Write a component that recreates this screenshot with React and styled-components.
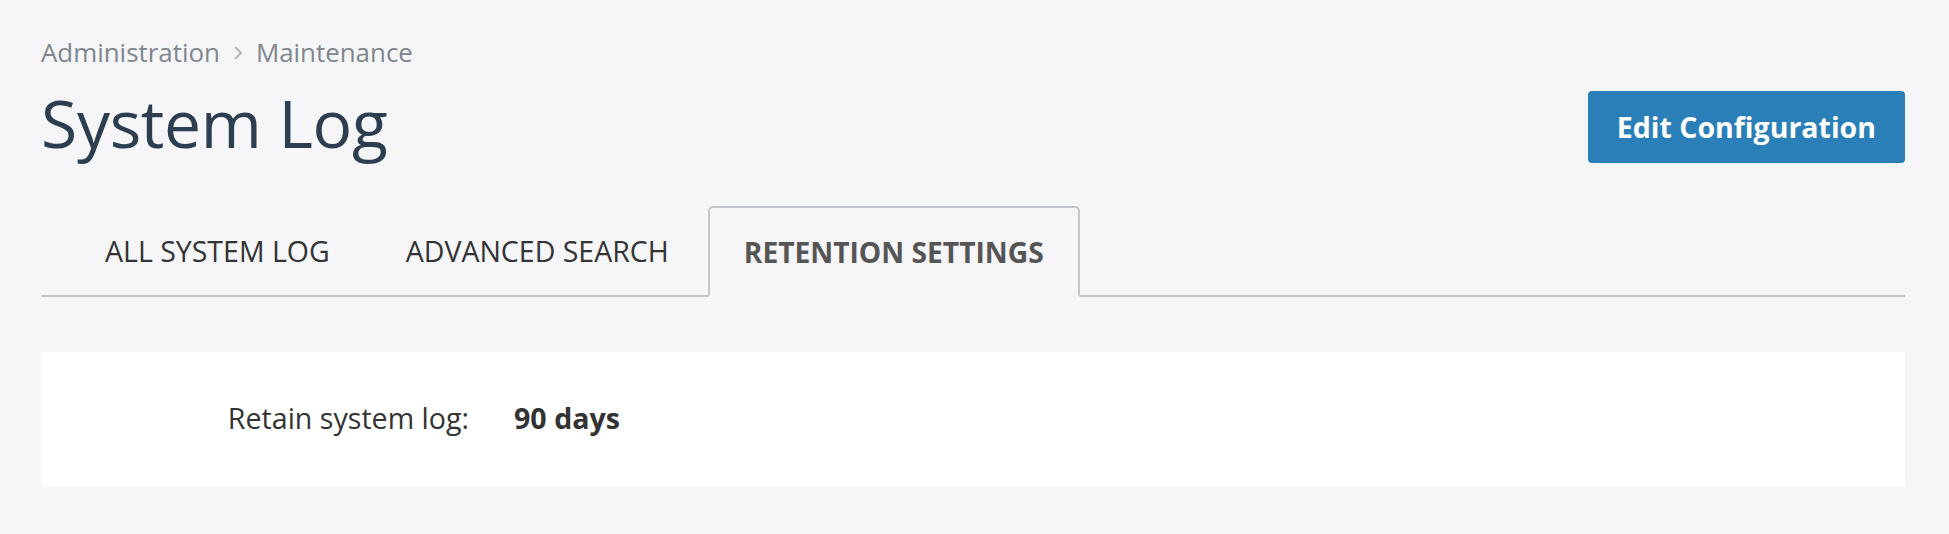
import React from 'react';
import styled, { createGlobalStyle } from 'styled-components';

const GlobalStyle = createGlobalStyle`
  html, body {
    margin: 0;
    padding: 0;
    background: #f6f6f8;
    font-family: 'Open Sans', 'Noto Sans', sans-serif;
  }
`

const Page = styled.div`
  padding: 30px 44px 40px 41px;
`

const Breadcrumb = styled.nav`
  display: flex;
  align-items: center;
  gap: 11px;
  font-size: 25.9px;
  color: #7f868e;
  height: 44px;
`

const Chevron = styled.svg`
  width: 14px;
  height: 18px;
  margin-top: 2px;
`

const HeaderRow = styled.div`
  display: flex;
  align-items: center;
  justify-content: space-between;
  margin-top: 4px;
`

const Title = styled.h1`
  margin: 0;
  font-size: 66px;
  font-weight: 400;
  color: #2c3e50;
  line-height: 88px;
  letter-spacing: -0.3px;
`

const PrimaryButton = styled.button`
  font-family: inherit;
  background: #2a7fb8;
  color: #fff;
  border: none;
  border-radius: 4px;
  font-size: 28.5px;
  font-weight: 700;
  height: 72px;
  padding: 0 29px;
  margin-top: 10px;
  cursor: pointer;
`

const TabList = styled.div`
  display: flex;
  align-items: flex-end;
  margin-top: 40px;
  padding-left: 27px;
  border-bottom: 2px solid #c3c6cb;
  height: 89px;
`

const Tab = styled.div`
  display: flex;
  align-items: center;
  height: ${p => (p.$active ? '87px' : '89px')};
  padding: 0 ${p => (p.$active ? '34px' : '37px')};
  margin-right: 2px;
  margin-bottom: ${p => (p.$active ? '-2px' : '0')};
  font-size: ${p => (p.$active ? '28.2px' : '28.5px')};
  font-weight: ${p => (p.$active ? 700 : 400)};
  color: ${p => (p.$active ? '#555555' : '#333333')};
  background: #f6f6f8;
  border: ${p => (p.$active ? '2px solid #c3c6cb' : 'none')};
  border-bottom: ${p => (p.$active ? '2px solid #f6f6f8' : 'none')};
  border-radius: 5px 5px 0 0;
  box-sizing: content-box;
`

const Card = styled.div`
  margin-top: 55px;
  background: #fff;
  height: 135px;
  display: grid;
  grid-template-columns: 428px auto;
  column-gap: 45px;
  align-items: center;
`

const Label = styled.div`
  font-size: 28.6px;
  color: #333;
  text-align: right;
  margin-top: -4px;
`

const Value = styled.div`
  font-size: 28.6px;
  font-weight: 700;
  color: #333;
  margin-top: -4px;
`

const tabs = ['ALL SYSTEM LOG', 'ADVANCED SEARCH', 'RETENTION SETTINGS']

export default function App() {
  return (
    <>
      <GlobalStyle />
      <Page>
        <Breadcrumb>
          <span>Administration</span>
          <Chevron viewBox="0 0 14 18">
            <path d="M4 3l6 6-6 6" fill="none" stroke="#b4b9bf" strokeWidth="2" />
          </Chevron>
          <span>Maintenance</span>
        </Breadcrumb>
        <HeaderRow>
          <Title>System Log</Title>
          <PrimaryButton>Edit Configuration</PrimaryButton>
        </HeaderRow>
        <TabList>
          {tabs.map((t, i) => (
            <Tab key={t} $active={i === 2}>{t}</Tab>
          ))}
        </TabList>
        <Card>
          <Label>Retain system log:</Label>
          <Value>90 days</Value>
        </Card>
      </Page>
    </>
  );
}
